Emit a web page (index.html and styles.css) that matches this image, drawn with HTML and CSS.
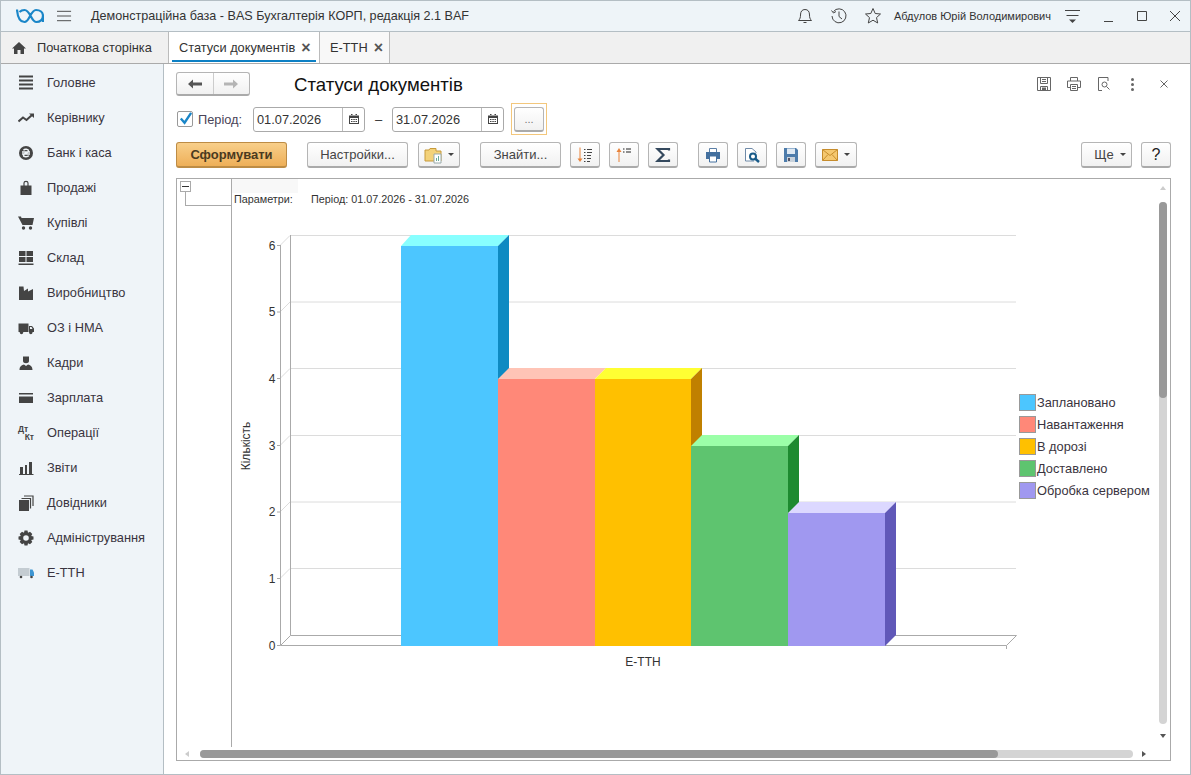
FILE: index.html
```html
<!DOCTYPE html>
<html lang="uk">
<head>
    <meta charset="UTF-8">
    <title>Статуси документів</title>
    <link rel="stylesheet" href="styles.css">
</head>
<body>
<div class="window">
    <!-- заголовок вікна -->
    <header class="titlebar">
        <svg class="logo" viewBox="0 0 28 16"><path d="M1 1.500C1.500 8 3 14 8.500 14C13.500 14 14.500 2 20 2C24 2 27 4.500 27 8C27 11.500 24 14 20.500 14C15 14 14.500 2 8.500 2C6.500 2 5 2.500 3.500 4"/><path d="M27 8V14"/></svg>
        <svg class="burger" viewBox="0 0 16 12"><path d="M0 1H15M0 6H15M0 11H15"/></svg>
        <span class="app-title">Демонстраційна база - BAS Бухгалтерія КОРП, редакція 2.1 BAF</span>
        <div class="title-right">
            <svg class="top-icon" viewBox="0 0 18 18"><path d="M2.500 13.500C4 12 4.500 10.500 4.500 8C4.500 4.500 6 2.500 9 2.500C12 2.500 13.500 4.500 13.500 8C13.500 10.500 14 12 15.500 13.500ZM7.500 15.500H10.500"/></svg>
            <svg class="top-icon" viewBox="0 0 18 18"><path d="M3.500 4.500A7 7 0 1 1 2 9M1.500 3.500L3.500 6L6 4.500M9 4.500V9.500L12 12"/></svg>
            <svg class="top-icon" viewBox="0 0 18 18"><path d="M9 1.500L11.200 6.500L16.500 7L12.500 10.600L13.700 16L9 13.200L4.300 16L5.500 10.600L1.500 7L6.800 6.500Z"/></svg>
            <span class="user">Абдулов Юрій Володимирович</span>
            <svg class="menu-lines" viewBox="0 0 15 14"><path class="thin" d="M0 1.500H15M1.500 6.500H13.500"/><path class="solid" d="M4 10.500H11L7.500 14Z"/></svg>
            <svg class="win-btn win-min" viewBox="0 0 12 12"><path d="M1 11.500H10"/></svg>
            <svg class="win-btn" viewBox="0 0 12 12"><path d="M1.500 1.500H10.500V10.500H1.500Z"/></svg>
            <svg class="win-btn" viewBox="0 0 12 12"><path d="M1 1L11 11M11 1L1 11"/></svg>
        </div>
    </header>

    <!-- вкладки -->
    <nav class="tabs">
        <div class="tab tab-home">
            <svg class="home-icon" viewBox="0 0 14 12"><path d="M7 0L14 6.500H12V12H8.500V8H5.500V12H2V6.500H0Z"/></svg>
            <span>Початкова сторінка</span>
        </div>
        <div class="tab tab-active"><span>Статуси документів</span><span class="tab-close">×</span></div>
        <div class="tab tab-open"><span>Е-ТТН</span><span class="tab-close">×</span></div>
    </nav>

    <div class="main">
        <aside class="sidebar">
            <div class="side-item"><svg viewBox="0 0 16 16"><path d="M1 1.500H15M1 5.500H15M1 9.500H15M1 13.500H15" class="st2"/></svg><span>Головне</span></div>
            <div class="side-item"><svg viewBox="0 0 16 16"><path d="M0.500 11.500L5 7.500L8.500 10L14 5" class="st2"/><path d="M11 3.500H16V8Z"/></svg><span>Керівнику</span></div>
            <div class="side-item"><svg viewBox="0 0 16 16"><circle cx="8" cy="8" r="7"/><path d="M5.500 5.300C6.500 3.800 10.500 4 10.500 6C10.500 8 5.500 8 5.500 10.200C5.500 12.200 9.800 12.200 10.800 10.700M4 7H12M4 9H12" class="wh"/></svg><span>Банк і каса</span></div>
            <div class="side-item"><svg viewBox="0 0 16 16"><path d="M2.500 5.500H13.500V15H2.500Z"/><path d="M6 7V3C6 0.800 10 0.800 10 3V7" class="st1"/></svg><span>Продажі</span></div>
            <div class="side-item"><svg viewBox="0 0 16 16"><path d="M0 1.500H3L3.500 3H16L14.500 10H4.500Z"/><circle cx="5.500" cy="13" r="1.700"/><circle cx="12.500" cy="13" r="1.700"/></svg><span>Купівлі</span></div>
            <div class="side-item"><svg viewBox="0 0 16 16"><path d="M1 1H7.500V6H1ZM8.500 1H15V6H8.500ZM1 7H7.500V12H1ZM8.500 7H15V12H8.500ZM0.500 13.500H15.500V15H0.500Z"/></svg><span>Склад</span></div>
            <div class="side-item"><svg viewBox="0 0 16 16"><path d="M1 15V1.500H5.500L6 6L10 3.500V6.500L15 4V15Z"/></svg><span>Виробництво</span></div>
            <div class="side-item"><svg viewBox="0 0 16 16"><path d="M0.500 3.500H10.500V12H0.500ZM11 6H14L16 8.500V12H11ZM12 7V9H14.500L13.500 7Z" fill-rule="evenodd"/><circle cx="3.500" cy="12.500" r="1.700"/><circle cx="12.800" cy="12.500" r="1.700"/></svg><span>ОЗ і НМА</span></div>
            <div class="side-item"><svg viewBox="0 0 16 16"><path d="M5 1.500H11V6C11 9 5 9 5 6Z"/><path d="M1.500 15C1.500 11 4 10 6 9.500L8 11L10 9.500C12 10 14.500 11 14.500 15Z"/></svg><span>Кадри</span></div>
            <div class="side-item"><svg viewBox="0 0 16 16"><path d="M1 3H15V4.500H1ZM1 6.500H15V13H1Z"/></svg><span>Зарплата</span></div>
            <div class="side-item"><span class="dt-kt"><b>Дт</b><b>Кт</b></span><span>Операції</span></div>
            <div class="side-item"><svg viewBox="0 0 16 16"><path d="M2 7H5V14H2ZM7 5H9V14H7ZM11 2H14V14H11ZM1 14H15.500V15H1Z"/></svg><span>Звіти</span></div>
            <div class="side-item"><svg viewBox="0 0 16 16"><path d="M1 5H11V16H1Z"/><path d="M3.500 3.500H12.500V13.500M6 1H15V11" class="st1"/></svg><span>Довідники</span></div>
            <div class="side-item"><svg viewBox="0 0 16 16"><path d="M6.500 0.500H9.500L10 2.800L12 1.700L14.300 4L13.200 6L15.500 6.500V9.500L13.200 10L14.300 12L12 14.300L10 13.200L9.500 15.500H6.500L6 13.200L4 14.300L1.700 12L2.800 10L0.500 9.500V6.500L2.800 6L1.700 4L4 1.700L6 2.800ZM8 5.200A2.800 2.800 0 1 0 8 10.800A2.800 2.800 0 1 0 8 5.200Z" fill-rule="evenodd"/></svg><span>Адміністрування</span></div>
            <div class="side-item"><svg viewBox="0 0 16 16"><path d="M0 3H11.500V11H0Z" class="truck-body"/><path d="M12 4.500H14.500L16 7.500V11H12Z" class="truck-cab"/><circle cx="3" cy="12" r="1.300"/><circle cx="13.500" cy="12" r="1.300"/></svg><span>Е-ТТН</span></div>
        </aside>

        <section class="content">
            <div class="head-row">
                <div class="nav-group">
                    <div class="nav-btn"><svg viewBox="0 0 14 10"><path d="M0 5L5 0.500V3.500H14V6.500H5V9.500Z"/></svg></div>
                    <div class="nav-btn nav-off"><svg viewBox="0 0 14 10"><path d="M14 5L9 0.500V3.500H0V6.500H9V9.500Z"/></svg></div>
                </div>
                <h1>Статуси документів</h1>
                <div class="head-tools">
                    <svg viewBox="0 0 16 16"><path d="M1.500 1.500H14.500V14.500H1.500ZM4.500 1.500V7.500H11.500V1.500M4.500 14.500V10.500H11.500V14.500M6 3.500H10M6 5.500H10"/><path class="fill-dark" d="M6 11.500H10V14.500H6Z"/></svg>
                    <svg viewBox="0 0 16 16"><path d="M4.500 5V1.500H11.500V5M4 11.500H1.500V5H14.500V11.500H12M4.500 8.500H11.500V14.500H4.500ZM6 10.500H10M6 12.500H10"/></svg>
                    <svg viewBox="0 0 16 16"><path d="M6 14.500H2.500V1.500H12V5M8.500 11A2.500 2.500 0 1 0 8.500 6A2.500 2.500 0 1 0 8.500 11ZM10.500 10.500L13.500 13.500"/></svg>
                    <span class="dots"><i></i><i></i><i></i></span>
                    <svg class="x-small" viewBox="0 0 8 8"><path d="M0.500 0.500L7.500 7.500M7.500 0.500L0.500 7.500"/></svg>
                </div>
            </div>

            <div class="period-row">
                <span class="check"><svg viewBox="0 0 16 16"><path d="M3 8L7 12.500L14 2"/></svg></span>
                <label class="period-label">Період:</label>
                <div class="date-field"><span>01.07.2026</span><span class="cal"><svg viewBox="0 0 10 10"><path d="M0 1.500H10V10H0ZM1 4V9H9V4ZM2 0H3.500V2H2ZM6.500 0H8V2H6.500ZM2 5H3.500V6H2ZM4.300 5H5.800V6H4.300ZM6.500 5H8V6H6.500ZM2 7H3.500V8H2ZM4.300 7H5.800V8H4.300ZM6.500 7H8V8H6.500Z" fill-rule="evenodd"/></svg></span></div>
                <span class="dash">–</span>
                <div class="date-field"><span>31.07.2026</span><span class="cal"><svg viewBox="0 0 10 10"><path d="M0 1.500H10V10H0ZM1 4V9H9V4ZM2 0H3.500V2H2ZM6.500 0H8V2H6.500ZM2 5H3.500V6H2ZM4.300 5H5.800V6H4.300ZM6.500 5H8V6H6.500ZM2 7H3.500V8H2ZM4.300 7H5.800V8H4.300ZM6.500 7H8V8H6.500Z" fill-rule="evenodd"/></svg></span></div>
                <div class="focus-box"><button class="btn btn-dots">...</button></div>
            </div>

            <div class="toolbar">
                <button class="btn btn-primary">Сформувати</button>
                <button class="btn btn-settings">Настройки...</button>
                <button class="btn btn-folder">
                    <svg viewBox="0 0 20 18"><path d="M1 4H5L6 2.500H12V5H17V15H1Z" fill="#f3d27a" stroke="#c79a3a"/><path d="M10 8H17V17H10Z" fill="#fff" stroke="#9aa"/><path d="M12 15V12H13V15ZM14 15V10H15V15Z" fill="#6a9"/></svg>
                    <span class="caret"></span>
                </button>
                <button class="btn btn-find">Знайти...</button>
                <button class="btn btn-icon"><svg viewBox="0 0 16 16"><path d="M3 0.500V13" stroke="#e8833a"/><path d="M0.500 11.500H5.500L3 15Z" fill="#e8833a"/><path d="M7 2.500H8.500M10 2.500H15M7 5.500H8.500M10 5.500H15M7 8.500H8.500M10 8.500H14M7 11.500H8.500M10 11.500H14M7 14.500H8.500M10 14.500H13" stroke="#444"/></svg></button>
                <button class="btn btn-icon"><svg viewBox="0 0 16 16"><path d="M3 4V15" stroke="#e8833a"/><path d="M0.500 5H5.500L3 1Z" fill="#e8833a"/><path d="M7 2H8.500M10 2H15M7 5H8.500M10 5H15" stroke="#222"/></svg></button>
                <button class="btn btn-icon"><svg viewBox="0 0 16 16"><path d="M14 3.500V2H2.500L8.500 8L2.500 14H14V12.500" fill="none" stroke="#34495e" stroke-width="2.200"/></svg></button>
                <button class="btn btn-icon btn-gap"><svg viewBox="0 0 16 16"><path d="M4.500 5V1.500H11.500V5" fill="#fff" stroke="#5b7fa6"/><path d="M1 5H15V12H1Z" fill="#44709f"/><path d="M4.500 9H11.500V15H4.500Z" fill="#fff" stroke="#44709f"/></svg></button>
                <button class="btn btn-icon"><svg viewBox="0 0 16 16"><path d="M10 14H1.500V1.500H8L12 5V6" fill="#fff" stroke="#6f8aa8"/><circle cx="9" cy="9.500" r="3" fill="#fff" stroke="#175a88" stroke-width="2"/><path d="M11 11.500L15 15" stroke="#175a88" stroke-width="2.400"/></svg></button>
                <button class="btn btn-icon"><svg viewBox="0 0 16 16"><path d="M1 1H13L15 3V15H1Z" fill="#4d7cab"/><path d="M4 1.500H12V7H4Z" fill="#dfe9f3"/><path d="M4 10H12V15H4Z" fill="#c9d2db"/><path d="M5 11H7V14H5Z" fill="#556"/></svg></button>
                <button class="btn btn-mail">
                    <svg viewBox="0 0 16 12"><path d="M0.500 0.500H15.500V11.500H0.500Z" fill="#f5c870" stroke="#c68c2c"/><path d="M0.500 0.500L8 6.500L15.500 0.500M0.500 11.500L6 5.500M15.500 11.500L10 5.500" fill="none" stroke="#c68c2c"/></svg>
                    <span class="caret"></span>
                </button>
                <button class="btn btn-more">Ще<span class="caret"></span></button>
                <button class="btn btn-help">?</button>
            </div>

            <div class="report">
                <div class="report-tree">
                    <span class="tree-box"></span>
                    <span class="tree-line"></span>
                </div>
                <div class="report-view">
                    <div class="param-cell"></div>
                    <div class="param-row"><span class="param-name">Параметри:</span><span>Період: 01.07.2026 - 31.07.2026</span></div>
                    <svg class="chart" width="925" height="530" viewBox="232 217 925 530">
                        <!-- сітка -->
                        <g class="grid">
                            <path d="M290 235.500H1016M290 302H1016M290 368.500H1016M290 435.500H1016M290 502H1016M290 568.500H1016"/>
                            <path d="M280 245.500L290 235.500M280 312L290 302M280 378.500L290 368.500M280 445.500L290 435.500M280 512L290 502M280 578.500L290 568.500"/>
                        </g>
                        <g class="axis">
                            <path d="M290.500 235V635.500H1016.500L1006.500 645.500H280.500V245M280.500 645.500L290.500 635.500M1006.500 645.500V649"/>
                            <path d="M277 245.500H280M277 312H280M277 378.500H280M277 445.500H280M277 512H280M277 578.500H280M277 645.500H280"/>
                        </g>
                        <g class="axis-nums">
                            <text x="272" y="250" text-anchor="middle">6</text>
                            <text x="272" y="316" text-anchor="middle">5</text>
                            <text x="272" y="383" text-anchor="middle">4</text>
                            <text x="272" y="450" text-anchor="middle">3</text>
                            <text x="272" y="516" text-anchor="middle">2</text>
                            <text x="272" y="583" text-anchor="middle">1</text>
                            <text x="272" y="650" text-anchor="middle">0</text>
                        </g>
                        <text class="axis-title" transform="translate(250 446) rotate(-90)" text-anchor="middle">Кількість</text>
                        <text class="axis-title" x="643" y="666" text-anchor="middle">Е-ТТН</text>
                        <!-- стовпчики -->
                        <polygon class="blue-top" points="401,246 411,235 509,235 498,246"/>
                        <polygon class="blue-side" points="498,246 509,235 509,635 498,646"/>
                        <rect class="blue" x="401" y="246" width="97" height="400"/>
                        <polygon class="red-top" points="498,379 509,368 606,368 595,379"/>
                        <rect class="red" x="498" y="379" width="97" height="267"/>
                        <polygon class="yellow-top" points="595,379 606,368 702,368 691,379"/>
                        <polygon class="yellow-side" points="691,379 702,368 702,635 691,646"/>
                        <rect class="yellow" x="595" y="379" width="96" height="267"/>
                        <polygon class="green-top" points="691,446 702,435 799,435 788,446"/>
                        <polygon class="green-side" points="788,446 799,435 799,635 788,646"/>
                        <rect class="green" x="691" y="446" width="97" height="200"/>
                        <polygon class="purple-top" points="788,513 799,502 896,502 885,513"/>
                        <polygon class="purple-side" points="885,513 896,502 896,635 885,646"/>
                        <rect class="purple" x="788" y="513" width="97" height="133"/>
                        <!-- легенда -->
                        <g class="legend">
                            <rect class="blue" x="1019.500" y="394.500" width="16" height="16"/>
                            <text x="1037" y="407">Заплановано</text>
                            <rect class="red" x="1019.500" y="416.500" width="16" height="16"/>
                            <text x="1037" y="429">Навантаження</text>
                            <rect class="yellow" x="1019.500" y="438.500" width="16" height="16"/>
                            <text x="1037" y="451">В дорозі</text>
                            <rect class="green" x="1019.500" y="460.500" width="16" height="16"/>
                            <text x="1037" y="473">Доставлено</text>
                            <rect class="purple" x="1019.500" y="482.500" width="16" height="16"/>
                            <text x="1037" y="495">Обробка сервером</text>
                        </g>
                    </svg>
                </div>
                <div class="vscroll">
                    <span class="arrow arrow-up"></span>
                    <div class="v-track"><div class="v-thumb"></div></div>
                    <span class="arrow arrow-down"></span>
                </div>
                <div class="hscroll">
                    <span class="arrow arrow-left"></span>
                    <div class="h-track"><div class="h-thumb"></div></div>
                    <span class="arrow arrow-right"></span>
                </div>
            </div>
        </section>
    </div>
</div>
</body>
</html>
```

FILE: styles.css
```css
* {
    box-sizing: border-box;
}
body {
    margin: 0;
    overflow: hidden;
    font-family: "Liberation Sans", Arial, sans-serif;
    font-size: 12px;
    color: #333;
}
.window {
    width: 1191px;
    height: 775px;
    display: flex;
    flex-direction: column;
    border: 1px solid #b4bec4;
    background: #fff;
}

/* заголовок */
.titlebar {
    height: 31px;
    flex: none;
    display: flex;
    align-items: center;
    background: #eef4f8;
    border-bottom: 1px solid #b4bec4;
    padding-left: 15px;
}
.logo {
    width: 28px;
    height: 16px;
    fill: none;
    stroke: #1a86c8;
    stroke-width: 2.2;
}
.burger {
    width: 15px;
    height: 12px;
    margin-left: 13px;
    fill: none;
    stroke: #444;
}
.app-title {
    margin-left: 19px;
    font-size: 12.6px;
    white-space: nowrap;
}
.title-right {
    margin-left: auto;
    display: flex;
    align-items: center;
}
.top-icon {
    width: 18px;
    height: 18px;
    margin-right: 16px;
    fill: none;
    stroke: #444;
}
.user {
    font-size: 11px;
    margin-left: -4px;
    white-space: nowrap;
}
.menu-lines {
    width: 15px;
    height: 14px;
    margin-left: 14px;
}
.menu-lines .thin {
    fill: none;
    stroke: #444;
}
.menu-lines .solid {
    fill: #444;
}
.win-btn {
    width: 12px;
    height: 12px;
    fill: none;
    stroke: #444;
    margin-left: 21px;
}
.win-min {
    margin-left: 23px;
}
.win-btn:last-child {
    margin-right: 9px;
}

/* вкладки */
.tabs {
    height: 32px;
    flex: none;
    display: flex;
    background: #f0f0f0;
    border-bottom: 1px solid #aaa;
}
.tab {
    display: flex;
    align-items: center;
    font-size: 12.8px;
    border-right: 1px solid #bbb;
    white-space: nowrap;
}
.tab-home {
    width: 168px;
    padding-left: 11px;
}
.home-icon {
    width: 14px;
    height: 12px;
    margin-right: 11px;
    fill: #444;
}
.tab-active {
    width: 151px;
    padding-left: 10px;
    background: #fff;
    position: relative;
}
.tab-active::after {
    content: "";
    position: absolute;
    left: 3px;
    right: 3px;
    bottom: 1px;
    height: 2px;
    background: #0d80c4;
}
.tab-open {
    width: 70px;
    padding-left: 10px;
    background: #f8f8f8;
}
.tab-close {
    margin-left: 6px;
    font-size: 16px;
    font-weight: bold;
    line-height: 1;
    color: #555;
}

/* ліва панель */
.main {
    flex: 1;
    display: flex;
    min-height: 0;
}
.sidebar {
    width: 163px;
    flex: none;
    background: #eff4f8;
    border-right: 1px solid #b4bec4;
    padding-top: 1px;
}
.side-item {
    height: 35px;
    display: flex;
    align-items: center;
    padding-left: 17px;
    font-size: 12.8px;
    color: #3a3440;
}
.side-item svg {
    width: 16px;
    height: 16px;
    margin-right: 13px;
    fill: #444;
    flex: none;
}
.side-item .st1 {
    fill: none;
    stroke: #444;
    stroke-width: 1.2;
}
.side-item .st2 {
    fill: none;
    stroke: #444;
    stroke-width: 2;
}
.side-item .wh {
    fill: none;
    stroke: #eff4f8;
    stroke-width: 1.5;
}
.side-item .truck-body {
    fill: #c4ccd2;
}
.side-item .truck-cab {
    fill: #3d95d2;
}
.dt-kt {
    width: 16px;
    margin-right: 13px;
    display: flex;
    flex-direction: column;
    font-size: 8.5px;
    line-height: 8px;
    color: #444;
}
.dt-kt b:last-child {
    align-self: flex-end;
}

/* робоча область */
.content {
    flex: 1;
    min-width: 0;
    display: flex;
    flex-direction: column;
    padding: 8px 19px 13px 12px;
}
.head-row {
    height: 24px;
    display: flex;
    align-items: center;
}
.nav-group {
    width: 74px;
    height: 24px;
    display: flex;
    border: 1px solid #b5b5b5;
    border-bottom: 2px solid #aaa;
    border-radius: 3px;
    background: linear-gradient(#fff, #f1f1f1);
}
.nav-btn {
    flex: 1;
    display: flex;
    align-items: center;
    justify-content: center;
}
.nav-btn svg {
    width: 14px;
    height: 10px;
    fill: #555;
}
.nav-off {
    border-left: 1px solid #ccc;
}
.nav-off svg {
    fill: #b5b5b5;
}
h1 {
    margin: 2px 0 0 44px;
    font-size: 18.6px;
    font-weight: normal;
    color: #111;
    white-space: nowrap;
}
.head-tools {
    margin-left: auto;
    display: flex;
    align-items: center;
}
.head-tools svg {
    width: 16px;
    height: 16px;
    margin-right: 14px;
    fill: none;
    stroke: #666;
}
.head-tools .fill-dark {
    fill: #666;
    stroke: none;
}
.head-tools .x-small {
    width: 8px;
    height: 8px;
    margin: 0 3px 0 26px;
}
.dots {
    display: flex;
    flex-direction: column;
    gap: 2px;
    margin-left: 5px;
}
.dots i {
    width: 3px;
    height: 3px;
    border-radius: 50%;
    background: #666;
}
.period-row {
    height: 32px;
    margin-top: 7px;
    display: flex;
    align-items: center;
}
.check {
    width: 16px;
    height: 16px;
    margin-left: 1px;
    border: 1px solid #999;
    border-radius: 2px;
    background: #fff;
}
.check svg {
    display: block;
    width: 15px;
    height: 15px;
    margin: -1px 0 0 0;
    fill: none;
    stroke: #1a86c8;
    stroke-width: 2.500;
}
.period-label {
    width: 45px;
    margin: 0 10px 0 5px;
    font-size: 12.8px;
    color: #4a4458;
}
.date-field {
    width: 112px;
    height: 25px;
    display: flex;
    align-items: center;
    justify-content: space-between;
    padding-left: 3px;
    border: 1px solid #aaa;
    border-radius: 3px;
    font-size: 12.8px;
    background: #fff;
}
.cal {
    width: 22px;
    height: 23px;
    display: flex;
    align-items: center;
    justify-content: center;
    border-left: 1px solid #bbb;
}
.cal svg {
    width: 10px;
    height: 10px;
    fill: #444;
}
.dash {
    width: 27px;
    text-align: center;
    font-size: 13px;
}
.focus-box {
    width: 36px;
    height: 32px;
    margin-left: 7px;
    display: flex;
    align-items: center;
    justify-content: center;
    border: 1px solid #f3c77c;
}
.btn {
    height: 26px;
    padding: 0;
    display: flex;
    align-items: center;
    justify-content: center;
    font-family: inherit;
    font-size: 13px;
    color: #444;
    border: 1px solid #b5b5b5;
    border-bottom: 2px solid #aaa;
    border-radius: 3px;
    background: linear-gradient(#fff, #f1f1f1);
}
.btn-dots {
    width: 30px;
    height: 25px;
    font-size: 11px;
    color: #777;
}
.toolbar {
    height: 26px;
    margin-top: 7px;
    display: flex;
    align-items: center;
    gap: 9px;
}
.btn-primary {
    width: 111px;
    font-weight: bold;
    color: #4a3a20;
    background: linear-gradient(#f8cf8a, #eeaf58);
    border-color: #bd8c45;
}
.btn-settings {
    width: 101px;
    margin-left: 11px;
}
.btn-folder {
    width: 42px;
    margin-left: 1px;
    gap: 4px;
}
.btn-folder svg {
    width: 20px;
    height: 18px;
}
.btn-find {
    width: 81px;
    margin-left: 11px;
}
.btn-icon {
    width: 30px;
}
.btn-icon svg {
    width: 16px;
    height: 16px;
    fill: none;
}
.btn-gap {
    margin-left: 11px;
}
.btn-mail {
    width: 42px;
    gap: 6px;
}
.btn-mail svg {
    width: 16px;
    height: 12px;
}
.btn-more {
    width: 51px;
    margin-left: auto;
    padding-left: 7px;
    gap: 6px;
}
.btn-help {
    width: 30px;
    font-size: 16px;
    color: #222;
}
.caret {
    width: 0;
    height: 0;
    border-left: 3px solid transparent;
    border-right: 3px solid transparent;
    border-top: 3px solid #444;
}

/* звіт */
.report {
    flex: 1;
    min-height: 0;
    margin-top: 10px;
    display: grid;
    grid-template-columns: 55px 1fr 14px;
    grid-template-rows: 1fr 13px;
    border: 1px solid #aaa;
}
.report-tree {
    position: relative;
    border-right: 1px solid #aaa;
}
.tree-box {
    position: absolute;
    left: 3px;
    top: 2px;
    width: 11px;
    height: 11px;
    border: 1px solid #aaa;
    background: linear-gradient(#333, #333) center / 7px 1px no-repeat;
}
.tree-line {
    position: absolute;
    left: 8px;
    top: 13px;
    width: 46px;
    height: 14px;
    border-left: 1px solid #aaa;
    border-bottom: 1px solid #aaa;
}
.report-view {
    min-width: 0;
    overflow: hidden;
}
.param-cell {
    width: 66px;
    height: 14px;
    background: #f8f8f8;
}
.param-row {
    height: 24px;
    padding-left: 2px;
    display: flex;
    align-items: flex-start;
    font-size: 10.8px;
    line-height: 12px;
    color: #333;
}
.param-name {
    width: 77px;
}
.chart {
    display: block;
}
.grid path {
    fill: none;
    stroke: #dcdcdc;
}
.axis path {
    fill: none;
    stroke: #aaa;
}
.axis-nums text,
.axis-title {
    font-size: 12px;
    fill: #333;
}
.legend text {
    font-size: 12.8px;
    fill: #3a3440;
}
.legend rect {
    stroke: #999;
}
.blue { fill: #4cc6ff; }
.blue-top { fill: #88ffff; }
.blue-side { fill: #0e8ac2; }
.red { fill: #ff8878; }
.red-top { fill: #ffc4b6; }
.yellow { fill: #ffc000; }
.yellow-top { fill: #ffff33; }
.yellow-side { fill: #c08000; }
.green { fill: #5ec46f; }
.green-top { fill: #9bffa8; }
.green-side { fill: #1e8a30; }
.purple { fill: #a098f0; }
.purple-top { fill: #dcd8ff; }
.purple-side { fill: #6058b8; }

/* прокрутка */
.vscroll {
    grid-row: 1 / 3;
    grid-column: 3;
    display: flex;
    flex-direction: column;
    align-items: center;
    padding: 7px 0 22px;
}
.v-track {
    flex: 1;
    width: 8px;
    margin: 12px 0 10px;
    border-radius: 4px;
    background: #d4d4d4;
}
.v-thumb {
    height: 196px;
    border-radius: 4px;
    background: #999;
}
.hscroll {
    grid-column: 1 / 3;
    display: flex;
    align-items: center;
    padding: 1px 10px 0 8px;
}
.h-track {
    flex: 1;
    height: 8px;
    margin: 0 9px 0 11px;
    border-radius: 4px;
    background: #d4d4d4;
}
.h-thumb {
    width: 798px;
    height: 8px;
    border-radius: 4px;
    background: #999;
}
.arrow {
    width: 0;
    height: 0;
    flex: none;
    border-style: solid;
    border-color: transparent;
}
.arrow-up {
    border-width: 0 3px 4px;
    border-bottom-color: #ccc;
}
.arrow-down {
    border-width: 4px 3px 0;
    border-top-color: #555;
}
.arrow-left {
    border-width: 3px 4px 3px 0;
    border-right-color: #ccc;
}
.arrow-right {
    border-width: 3px 0 3px 4px;
    border-left-color: #555;
}
```
